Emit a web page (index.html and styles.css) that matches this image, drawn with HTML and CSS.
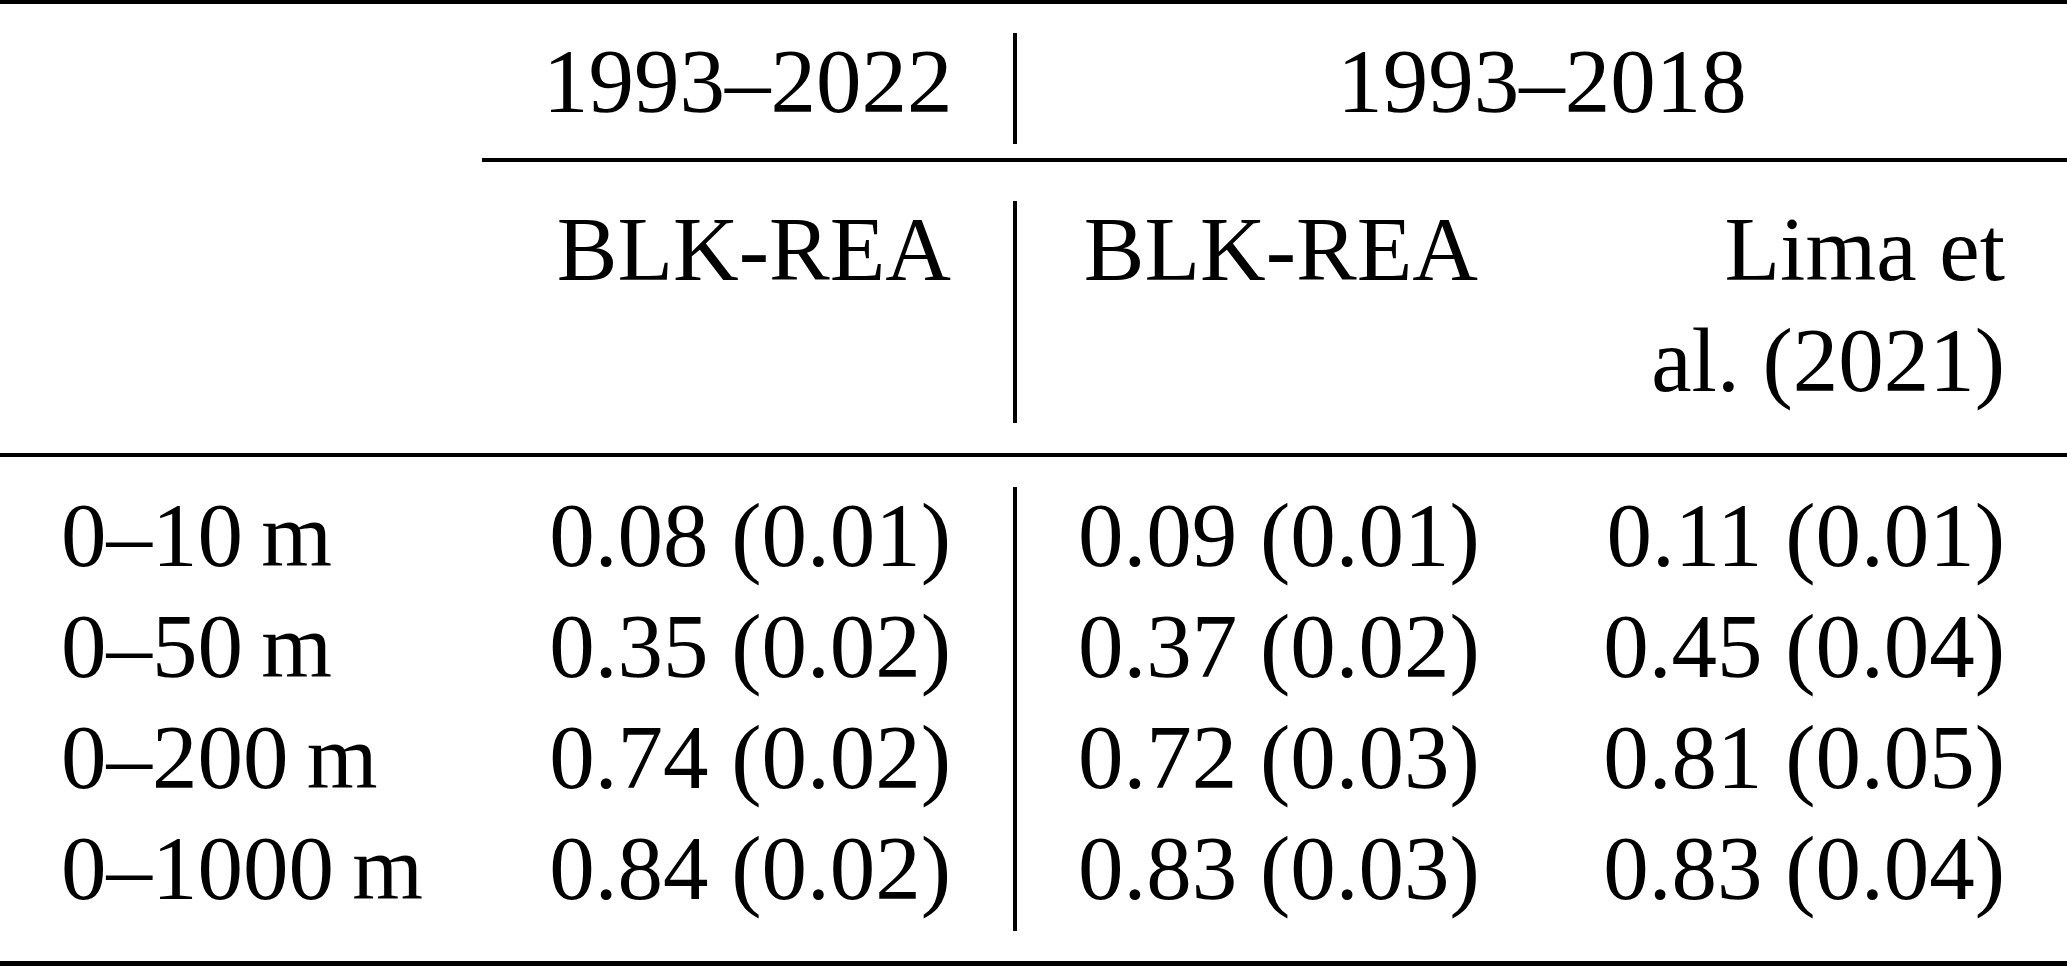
FILE: index.html
```html
<!DOCTYPE html>
<html lang="en">
<head>
  <meta charset="utf-8">
  <title>Trend comparison</title>
  <link rel="stylesheet" href="styles.css">
</head>
<body>
  <div class="table">
    <div class="rule rule-top"></div>

    <div class="band band-years">
      <div class="cell"></div>
      <div class="cell num">1993–2022</div>
      <div class="vline"></div>
      <div class="cell span">1993–2018</div>
    </div>

    <div class="rule rule-cmid"></div>

    <div class="band band-heads">
      <div class="cell"></div>
      <div class="cell num">BLK-REA</div>
      <div class="vline"></div>
      <div class="cell num">BLK-REA</div>
      <div class="cell num last">Lima et<br>al. (2021)</div>
    </div>

    <div class="rule rule-mid"></div>

    <div class="band band-data">
      <div class="vline"></div>

      <div class="cell">0–10&thinsp;m</div>
      <div class="cell num">0.08 (0.01)</div>
      <div class="cell num">0.09 (0.01)</div>
      <div class="cell num last">0.11 (0.01)</div>

      <div class="cell">0–50&thinsp;m</div>
      <div class="cell num">0.35 (0.02)</div>
      <div class="cell num">0.37 (0.02)</div>
      <div class="cell num last">0.45 (0.04)</div>

      <div class="cell">0–200&thinsp;m</div>
      <div class="cell num">0.74 (0.02)</div>
      <div class="cell num">0.72 (0.03)</div>
      <div class="cell num last">0.81 (0.05)</div>

      <div class="cell">0–1000&thinsp;m</div>
      <div class="cell num">0.84 (0.02)</div>
      <div class="cell num">0.83 (0.03)</div>
      <div class="cell num last">0.83 (0.04)</div>
    </div>

    <div class="rule rule-bottom"></div>
  </div>
</body>
</html>
```

FILE: styles.css
```css
body {
  margin: 0;
  background: #fff;
  color: #000;
  font-family: 'Liberation Serif', 'Times New Roman', serif;
}

.table {
  width: 2067px;
  font-size: 91px;
  line-height: 111px;
}

.rule {
  background: #000;
  height: 4px;
}

.rule-cmid {
  margin-left: 482px;
}

.rule-bottom {
  height: 5px;
}

.band {
  display: grid;
  grid-template-columns: 482px 531px 4px 523px 527px;
  grid-template-rows: auto;
}

.band-years {
  padding: 22px 0 21px;
}

.band-heads {
  padding: 32px 0 37px;
}

.band-data {
  grid-template-rows: repeat(4, 111px);
  padding: 23px 0 37px;
}

.vline {
  grid-column: 3;
  grid-row: 1 / -1;
  background: #000;
  margin: 7px 0 -7px;
}

.cell {
  padding: 0 62px 0 61px;
  white-space: nowrap;
}

.num {
  text-align: right;
}

.last {
  padding-right: 62px;
}

.span {
  grid-column: 4 / span 2;
  text-align: center;
  padding: 0;
}
```
